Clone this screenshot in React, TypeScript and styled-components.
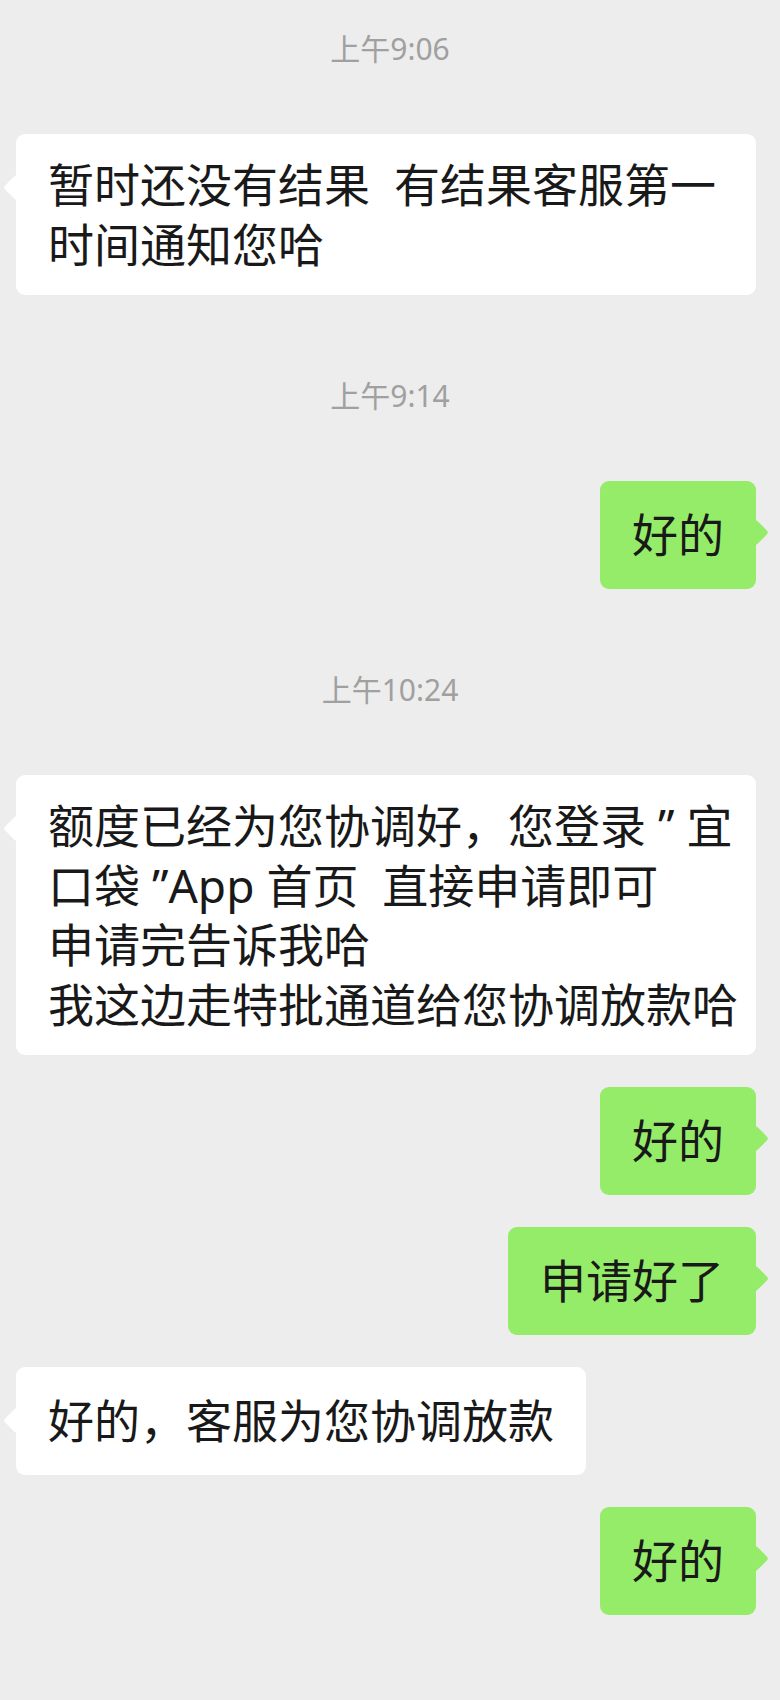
import React from 'react';
import styled, { createGlobalStyle, css } from 'styled-components';

const GlobalStyle = createGlobalStyle`
  html, body {
    margin: 0;
    padding: 0;
    background: #ededed;
  }
  body {
    font-family: "Noto Sans", "Noto Sans CJK SC", sans-serif;
    -webkit-font-smoothing: antialiased;
  }
  * { box-sizing: border-box; }
`;

const Chat = styled.main`
  display: flex;
  flex-direction: column;
  gap: 32px;
  padding: 29px 0 80px;
  min-height: 1700px;
  background: #ededed;
`;

const Time = styled.div`
  text-align: center;
  font-size: 30px;
  line-height: 40px;
  color: #a0a0a0;
  margin: 49px 0 33px;
  &:first-child {
    margin-top: 0;
  }
`;

const Row = styled.div<{ $mine?: boolean }>`
  display: flex;
  justify-content: ${(p) => (p.$mine ? 'flex-end' : 'flex-start')};
  padding: 0 24px 0 16px;
`;

const Bubble = styled.div<{ $mine?: boolean; $fill?: boolean }>`
  position: relative;
  min-height: 108px;
  min-width: 0;
  padding: 21px 32px;
  display: flex;
  flex-direction: column;
  justify-content: center;
  border-radius: 9px;
  background: ${(p) => (p.$mine ? '#95ec69' : '#ffffff')};
  color: #191919;
  font-size: 46px;
  line-height: 59.5px;
  ${(p) =>
    p.$fill &&
    css`
      flex: 1;
    `}
  &::before {
    content: '';
    position: absolute;
    top: ${(p) => (p.$mine ? 42 : 44)}px;
    ${(p) => (p.$mine ? 'right: -9px;' : 'left: -9px;')}
    width: 19px;
    height: 19px;
    background: inherit;
    border-radius: 3px;
    transform: rotate(45deg);
  }
`;

const Line = styled.span`
  display: block;
  white-space: pre;
`;

type Item =
  | { kind: 'time'; text: string }
  | { kind: 'msg'; mine?: boolean; fill?: boolean; lines: string[] };

const items: Item[] = [
  { kind: 'time', text: '上午9:06' },
  { kind: 'msg', fill: true, lines: ['暂时还没有结果  有结果客服第一', '时间通知您哈'] },
  { kind: 'time', text: '上午9:14' },
  { kind: 'msg', mine: true, lines: ['好的'] },
  { kind: 'time', text: '上午10:24' },
  {
    kind: 'msg',
    fill: true,
    lines: [
      '额度已经为您协调好，您登录 ” 宜',
      '口袋 ”App 首页  直接申请即可',
      '申请完告诉我哈',
      '我这边走特批通道给您协调放款哈',
    ],
  },
  { kind: 'msg', mine: true, lines: ['好的'] },
  { kind: 'msg', mine: true, lines: ['申请好了'] },
  { kind: 'msg', lines: ['好的，客服为您协调放款'] },
  { kind: 'msg', mine: true, lines: ['好的'] },
];

export default function App() {
  return (
    <>
      <GlobalStyle />
      <Chat>
        {items.map((it, i) =>
          it.kind === 'time' ? (
            <Time key={i}>{it.text}</Time>
          ) : (
            <Row key={i} $mine={it.mine}>
              <Bubble $mine={it.mine} $fill={it.fill}>
                {it.lines.map((l, j) => (
                  <Line key={j}>{l}</Line>
                ))}
              </Bubble>
            </Row>
          )
        )}
      </Chat>
    </>
  );
}
